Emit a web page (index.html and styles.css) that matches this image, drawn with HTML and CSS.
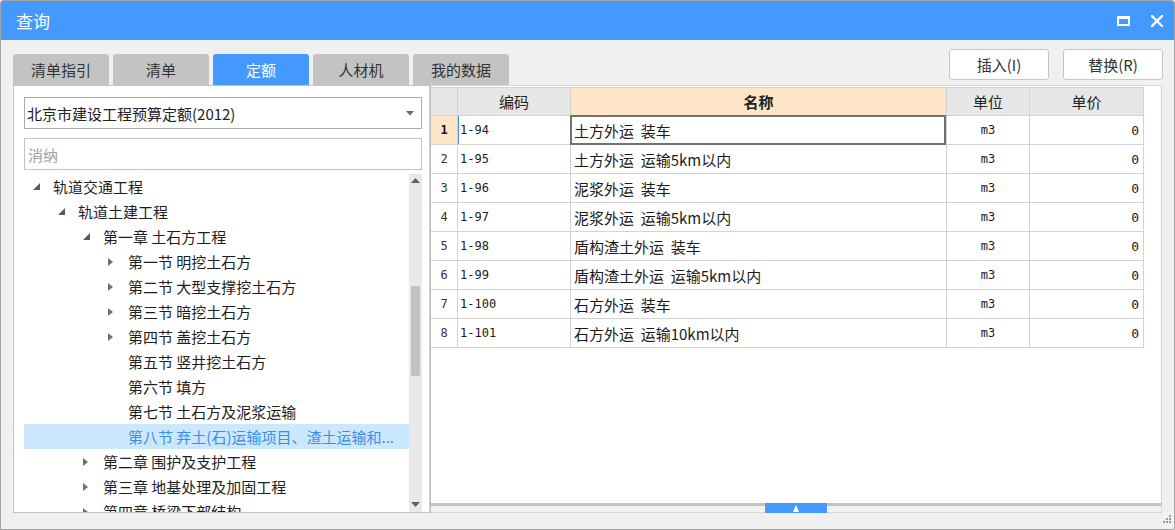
FILE: index.html
```html
<!DOCTYPE html>
<html lang="zh">
<head>
<meta charset="utf-8">
<title>查询</title>
<link rel="stylesheet" href="styles.css">
</head>
<body>
<div class="window">
  <div class="titlebar">
    <span class="title">查询</span>
    <div class="ctrls">
      <svg class="ico-max" width="13" height="10" viewBox="0 0 13 10"><rect x="1" y="1.5" width="11" height="7.5" fill="none" stroke="#fff" stroke-width="2"/><rect x="0" y="0" width="13" height="3" fill="#fff"/></svg>
      <svg class="ico-close" width="12" height="12" viewBox="0 0 12 12"><path d="M1 1 L11 11 M11 1 L1 11" stroke="#fff" stroke-width="2.4" stroke-linecap="square"/></svg>
    </div>
  </div>
  <div class="body">
    <div class="toprow">
      <div class="tabs">
        <div class="tab">清单指引</div>
        <div class="tab">清单</div>
        <div class="tab active">定额</div>
        <div class="tab">人材机</div>
        <div class="tab">我的数据</div>
      </div>
      <div class="btns">
        <button class="btn">插入(I)</button>
        <button class="btn">替换(R)</button>
      </div>
    </div>
    <div class="main">
      <div class="left">
        <div class="select">
          <span class="select-text">北京市建设工程预算定额(2012)</span>
          <svg width="8" height="5" viewBox="0 0 8 5"><path d="M0 0 H8 L4 4.5 Z" fill="#6a6a6a"/></svg>
        </div>
        <div class="search"><span class="ph">消纳</span></div>
        <div class="tree">
          <div class="rows">
            <div class="row l0"><span class="tg"><svg width="7" height="7" viewBox="0 0 7 7"><path d="M7 0 V7 H0 Z" fill="#5a5a5a"/></svg></span>轨道交通工程</div>
            <div class="row l1"><span class="tg"><svg width="7" height="7" viewBox="0 0 7 7"><path d="M7 0 V7 H0 Z" fill="#5a5a5a"/></svg></span>轨道土建工程</div>
            <div class="row l2"><span class="tg"><svg width="7" height="7" viewBox="0 0 7 7"><path d="M7 0 V7 H0 Z" fill="#5a5a5a"/></svg></span>第一章 土石方工程</div>
            <div class="row l3"><span class="tg"><svg width="5" height="8" viewBox="0 0 5 8"><path d="M0 0 L5 4 L0 8 Z" fill="#707070"/></svg></span>第一节 明挖土石方</div>
            <div class="row l3"><span class="tg"><svg width="5" height="8" viewBox="0 0 5 8"><path d="M0 0 L5 4 L0 8 Z" fill="#707070"/></svg></span>第二节 大型支撑挖土石方</div>
            <div class="row l3"><span class="tg"><svg width="5" height="8" viewBox="0 0 5 8"><path d="M0 0 L5 4 L0 8 Z" fill="#707070"/></svg></span>第三节 暗挖土石方</div>
            <div class="row l3"><span class="tg"><svg width="5" height="8" viewBox="0 0 5 8"><path d="M0 0 L5 4 L0 8 Z" fill="#707070"/></svg></span>第四节 盖挖土石方</div>
            <div class="row l3"><span class="tg"></span>第五节 竖井挖土石方</div>
            <div class="row l3"><span class="tg"></span>第六节 填方</div>
            <div class="row l3"><span class="tg"></span>第七节 土石方及泥浆运输</div>
            <div class="row l3 sel"><span class="tg"></span>第八节 弃土(石)运输项目、渣土运输和...</div>
            <div class="row l2"><span class="tg"><svg width="5" height="8" viewBox="0 0 5 8"><path d="M0 0 L5 4 L0 8 Z" fill="#707070"/></svg></span>第二章 围护及支护工程</div>
            <div class="row l2"><span class="tg"><svg width="5" height="8" viewBox="0 0 5 8"><path d="M0 0 L5 4 L0 8 Z" fill="#707070"/></svg></span>第三章 地基处理及加固工程</div>
            <div class="row l2"><span class="tg"><svg width="5" height="8" viewBox="0 0 5 8"><path d="M0 0 L5 4 L0 8 Z" fill="#707070"/></svg></span>第四章 桥梁下部结构</div>
          </div>
          <div class="vscroll">
            <svg class="arr" width="9" height="5" viewBox="0 0 9 5"><path d="M0 5 L4.5 0 L9 5 Z" fill="#606060"/></svg>
            <div class="track"><div class="thumb"></div></div>
            <svg class="arr" width="9" height="5" viewBox="0 0 9 5"><path d="M0 0 H9 L4.5 5 Z" fill="#606060"/></svg>
          </div>
        </div>
      </div>
      <div class="right">
        <div class="grid">
          <div class="hc num"></div>
          <div class="hc">编码</div>
          <div class="hc name">名称</div>
          <div class="hc">单位</div>
          <div class="hc">单价</div>

          <div class="c num cur">1</div><div class="c code curcode">1-94</div><div class="c nm cursel">土方外运  装车</div><div class="c unit">m3</div><div class="c price">0</div>
          <div class="c num">2</div><div class="c code">1-95</div><div class="c nm">土方外运  运输5km以内</div><div class="c unit">m3</div><div class="c price">0</div>
          <div class="c num">3</div><div class="c code">1-96</div><div class="c nm">泥浆外运  装车</div><div class="c unit">m3</div><div class="c price">0</div>
          <div class="c num">4</div><div class="c code">1-97</div><div class="c nm">泥浆外运  运输5km以内</div><div class="c unit">m3</div><div class="c price">0</div>
          <div class="c num">5</div><div class="c code">1-98</div><div class="c nm">盾构渣土外运  装车</div><div class="c unit">m3</div><div class="c price">0</div>
          <div class="c num">6</div><div class="c code">1-99</div><div class="c nm">盾构渣土外运  运输5km以内</div><div class="c unit">m3</div><div class="c price">0</div>
          <div class="c num">7</div><div class="c code">1-100</div><div class="c nm">石方外运  装车</div><div class="c unit">m3</div><div class="c price">0</div>
          <div class="c num">8</div><div class="c code">1-101</div><div class="c nm">石方外运  运输10km以内</div><div class="c unit">m3</div><div class="c price">0</div>
        </div>
        <div class="filler"></div>
        <div class="splitter">
          <div class="handle"><svg width="6" height="7" viewBox="0 0 6 7"><path d="M0 7 L3 0 L6 7 Z" fill="#fff"/></svg></div>
        </div>
      </div>
    </div>
  </div>
  <svg class="grip" width="10" height="10" viewBox="0 0 10 10">
    <rect x="7" y="1" width="2" height="2" fill="#9a9a9a"/>
    <rect x="4" y="4" width="2" height="2" fill="#9a9a9a"/><rect x="7" y="4" width="2" height="2" fill="#9a9a9a"/>
    <rect x="1" y="7" width="2" height="2" fill="#9a9a9a"/><rect x="4" y="7" width="2" height="2" fill="#9a9a9a"/><rect x="7" y="7" width="2" height="2" fill="#9a9a9a"/>
  </svg>
</div>
</body>
</html>
```
FILE: styles.css
```css
* { box-sizing: border-box; }
html, body { margin: 0; padding: 0; }
body {
  width: 1175px;
  height: 530px;
  overflow: hidden;
  font-family: "Noto Sans CJK SC", "Microsoft YaHei", sans-serif;
  font-size: 15px;
  color: #222;
  background: #fff;
}
.window {
  position: relative;
  width: 1175px;
  height: 530px;
  border: 1px solid #a4a4a4;
  border-radius: 3px 3px 0 0;
  background: #f0f0f0;
  display: flex;
  flex-direction: column;
  overflow: hidden;
}
.titlebar {
  height: 39px;
  flex: none;
  background: #4499ff;
  color: #fff;
  display: flex;
  align-items: center;
  justify-content: space-between;
  padding: 0 11px 0 15px;
}
.title { font-size: 17px; line-height: 20px; }
.ctrls { display: flex; align-items: center; gap: 21px; }

.body {
  height: 489px;
  flex: none;
  display: flex;
  flex-direction: column;
  padding: 0 11px 0 12px;
}
.toprow {
  height: 45px;
  flex: none;
  display: flex;
  justify-content: space-between;
}
.tabs { display: flex; align-items: flex-end; gap: 4px; }
.tab {
  width: 96px;
  height: 31px;
  background: #c3c3c3;
  border-radius: 3px 3px 0 0;
  text-align: center;
  line-height: 31px;
  color: #333;
  font-size: 15px;
}
.tab.active { background: #4499ff; color: #fff; }
.btns { display: flex; gap: 14px; padding-top: 9px; }
.btn {
  width: 100px;
  height: 31px;
  background: #fff;
  border: 1px solid #c6c6c6;
  border-radius: 3px;
  font-family: inherit;
  font-size: 15px;
  color: #333;
  padding: 0;
}

.main { height: 428px; flex: none; display: flex; overflow: hidden; }
.left {
  width: 417px;
  height: 428px;
  flex: none;
  background: #fff;
  border: 1px solid #c4c4c4;
  border-right-color: #d0d0d0;
  padding: 11px 7px 0 10px;
  display: flex;
  flex-direction: column;
  overflow: hidden;
}
.select {
  height: 32px;
  flex: none;
  border: 1px solid #ababab;
  display: flex;
  align-items: center;
  justify-content: space-between;
  padding: 0 7px 0 2px;
}
.select-text { font-size: 15px; color: #222; }
.search {
  height: 32px;
  flex: none;
  margin-top: 9px;
  border: 1px solid #c4c4c4;
  display: flex;
  align-items: center;
  padding-left: 3px;
}
.ph { color: #a0a0a0; font-size: 15px; }
.tree {
  margin-top: 4px;
  height: 338px;
  flex: none;
  display: flex;
  overflow: hidden;
}
.rows { flex: 1; overflow: hidden; }
.row {
  height: 25px;
  display: flex;
  align-items: center;
  white-space: nowrap;
  font-size: 15px;
  color: #1e1e1e;
}
.row.l0 { padding-left: 9px; }
.row.l1 { padding-left: 34px; }
.row.l2 { padding-left: 59px; }
.row.l3 { padding-left: 84px; }
.tg { width: 20px; flex: none; display: flex; align-items: center; }
.row.sel { background: #cce8ff; color: #3a8ee6; }
.vscroll {
  width: 13px;
  flex: none;
  background: #e9e9e9;
  display: flex;
  flex-direction: column;
  align-items: center;
  padding: 4px 0 5px;
}
.arr { flex: none; }
.track { flex: 1; width: 100%; padding: 103px 2px 0; }
.thumb { width: 9px; height: 90px; background: #c2c2c2; border-radius: 1px; }

.right {
  width: 732px;
  height: 428px;
  flex: none;
  background: #fff;
  border: 1px solid #d6d6d6;
  border-left-color: #bcbcbc;
  padding-top: 1px;
  display: flex;
  flex-direction: column;
}
.grid {
  display: grid;
  grid-template-columns: 27px 113px 376px 83px 114px;
  grid-auto-rows: 29px;
  grid-template-rows: 28px;
  border-top: 1px solid #d3d3d3;
  width: 713px;
}
.hc {
  background: #e7e7e7;
  border-right: 1px solid #d3d3d3;
  border-bottom: 1px solid #d3d3d3;
  display: flex;
  align-items: center;
  justify-content: center;
  font-size: 15px;
  color: #222;
}
.hc.name { background: #ffe5c7; font-weight: bold; border-bottom-color: #8fb8e8; }
.c {
  border-right: 1px solid #d3d3d3;
  border-bottom: 1px solid #d3d3d3;
  display: flex;
  align-items: center;
  white-space: pre;
  color: #1a1a1a;
}
.c.num {
  justify-content: center;
  font-family: "DejaVu Sans Mono", monospace;
  font-size: 12px;
  color: #333;
}
.c.num.cur { background: #ffe5c7; font-weight: bold; color: #111; }
.c.code { font-family: "DejaVu Sans Mono", monospace; font-size: 12px; padding-left: 2px; }
.c.curcode { box-shadow: inset 1px 0 0 #4a90e2; }
.c.nm { font-size: 15px; padding-left: 3px; }
.c.cursel { position: relative; }
.c.cursel::after {
  content: "";
  position: absolute;
  left: -1px;
  top: -1px;
  right: 0;
  bottom: -1px;
  border: 2px solid #717171;
}
.c.unit { justify-content: center; font-family: "DejaVu Sans Mono", monospace; font-size: 12px; }
.c.price { justify-content: flex-end; padding-right: 4px; font-family: "DejaVu Sans Mono", monospace; font-size: 13px; }
.filler { flex: 1; }
.splitter {
  height: 9px;
  flex: none;
  border-top: 3px solid #c2c2c2;
  background: #f2f2f2;
  position: relative;
}
.handle {
  position: absolute;
  left: 334px;
  top: -3px;
  width: 62px;
  height: 10px;
  background: #4499ff;
  display: flex;
  align-items: center;
  justify-content: center;
}
.grip { position: absolute; right: 2px; bottom: 5px; }
```
